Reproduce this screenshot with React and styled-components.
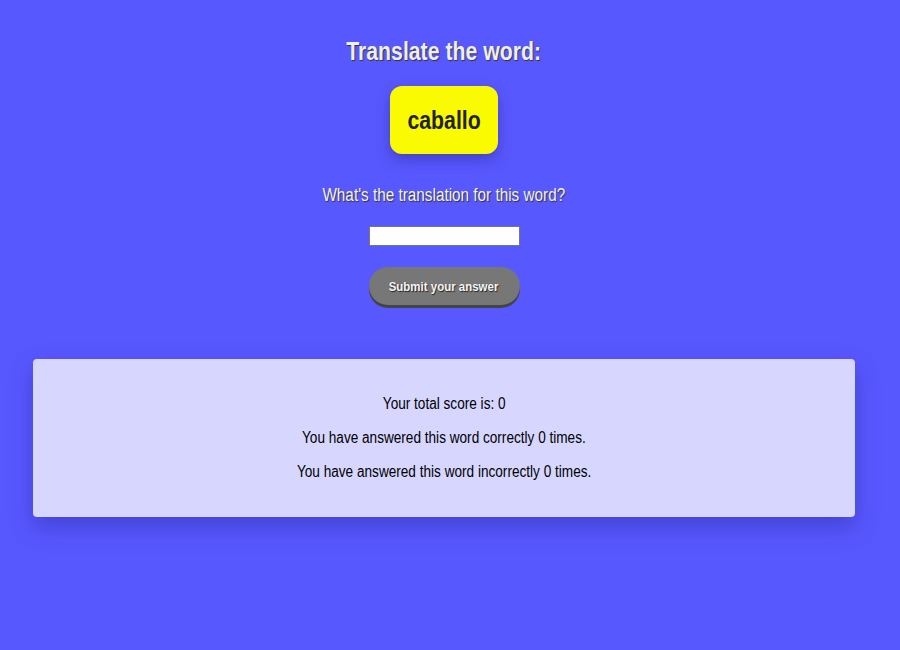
import React from 'react';
import styled, { createGlobalStyle } from 'styled-components';

const GlobalStyle = createGlobalStyle`
  html, body {
    margin: 0;
    padding: 0;
    background: #5858ff;
    font-family: "Liberation Sans Narrow", "Arial Narrow", "Liberation Sans", Arial, sans-serif;
  }
`;

// no narrow face is installed, so squeeze Liberation Sans the way Arial Narrow does
const narrow = `
  transform: scaleX(0.85);
  white-space: nowrap;
`;

const Page = styled.div`
  width: 888px;
  min-height: 650px;
  display: flex;
  flex-direction: column;
  align-items: center;
  padding-top: 36px;
  box-sizing: border-box;
`;

const Title = styled.h1`
  margin: 0;
  font-size: 25px;
  font-weight: bold;
  color: #eeeeee;
  text-shadow: 1px 1px 1px #333;
  line-height: 30px;
  ${narrow}
`;

const WordCard = styled.div`
  margin-top: 20px;
  width: 108px;
  height: 68px;
  display: flex;
  align-items: center;
  justify-content: center;
  background: #fafa00;
  border-radius: 12px;
  box-shadow: 0 6px 14px rgba(40, 40, 140, 0.45);
  font-size: 25px;
  font-weight: bold;
  color: #222;
`;

const NarrowText = styled.span`
  display: inline-block;
  ${narrow}
`;

const Question = styled.p`
  margin: 30px 0 0;
  font-size: 18px;
  line-height: 22px;
  color: #f2f2f2;
  text-shadow: 1px 1px 1px #333;
  ${narrow}
`;

const AnswerInput = styled.input`
  margin-top: 20px;
  width: 151px;
  height: 20px;
  box-sizing: border-box;
  border: 1px solid #777;
  background: #fff;
  padding: 0 4px;
`;

const SubmitButton = styled.button`
  margin-top: 21px;
  width: 151px;
  height: 38px;
  border: none;
  border-radius: 20px;
  background: #777777;
  box-shadow: 0 3px 0 #444;
  color: #f4f4f4;
  font-family: inherit;
  font-size: 13.5px;
  font-weight: bold;
  text-shadow: 1px 1px 1px #222;
  cursor: pointer;
`;

const ScorePanel = styled.div`
  margin-top: 54px;
  align-self: stretch;
  margin-left: 33px;
  margin-right: 33px;
  height: 158px;
  box-sizing: border-box;
  padding-top: 35px;
  background: #d6d6ff;
  border-radius: 4px;
  box-shadow: 0 10px 24px rgba(40, 40, 160, 0.45);
  display: flex;
  flex-direction: column;
  align-items: center;
  gap: 14px;
`;

const ScoreLine = styled.p`
  margin: 0;
  font-size: 16px;
  line-height: 20px;
  color: #000;
  ${narrow}
`;

export default function App() {
  return (
    <>
      <GlobalStyle />
      <Page>
        <Title>Translate the word:</Title>
        <WordCard>
          <NarrowText>caballo</NarrowText>
        </WordCard>
        <Question>What's the translation for this word?</Question>
        <AnswerInput type="text" />
        <SubmitButton>
          <NarrowText>Submit your answer</NarrowText>
        </SubmitButton>
        <ScorePanel>
          <ScoreLine>Your total score is: 0</ScoreLine>
          <ScoreLine>You have answered this word correctly 0 times.</ScoreLine>
          <ScoreLine>You have answered this word incorrectly 0 times.</ScoreLine>
        </ScorePanel>
      </Page>
    </>
  );
}
